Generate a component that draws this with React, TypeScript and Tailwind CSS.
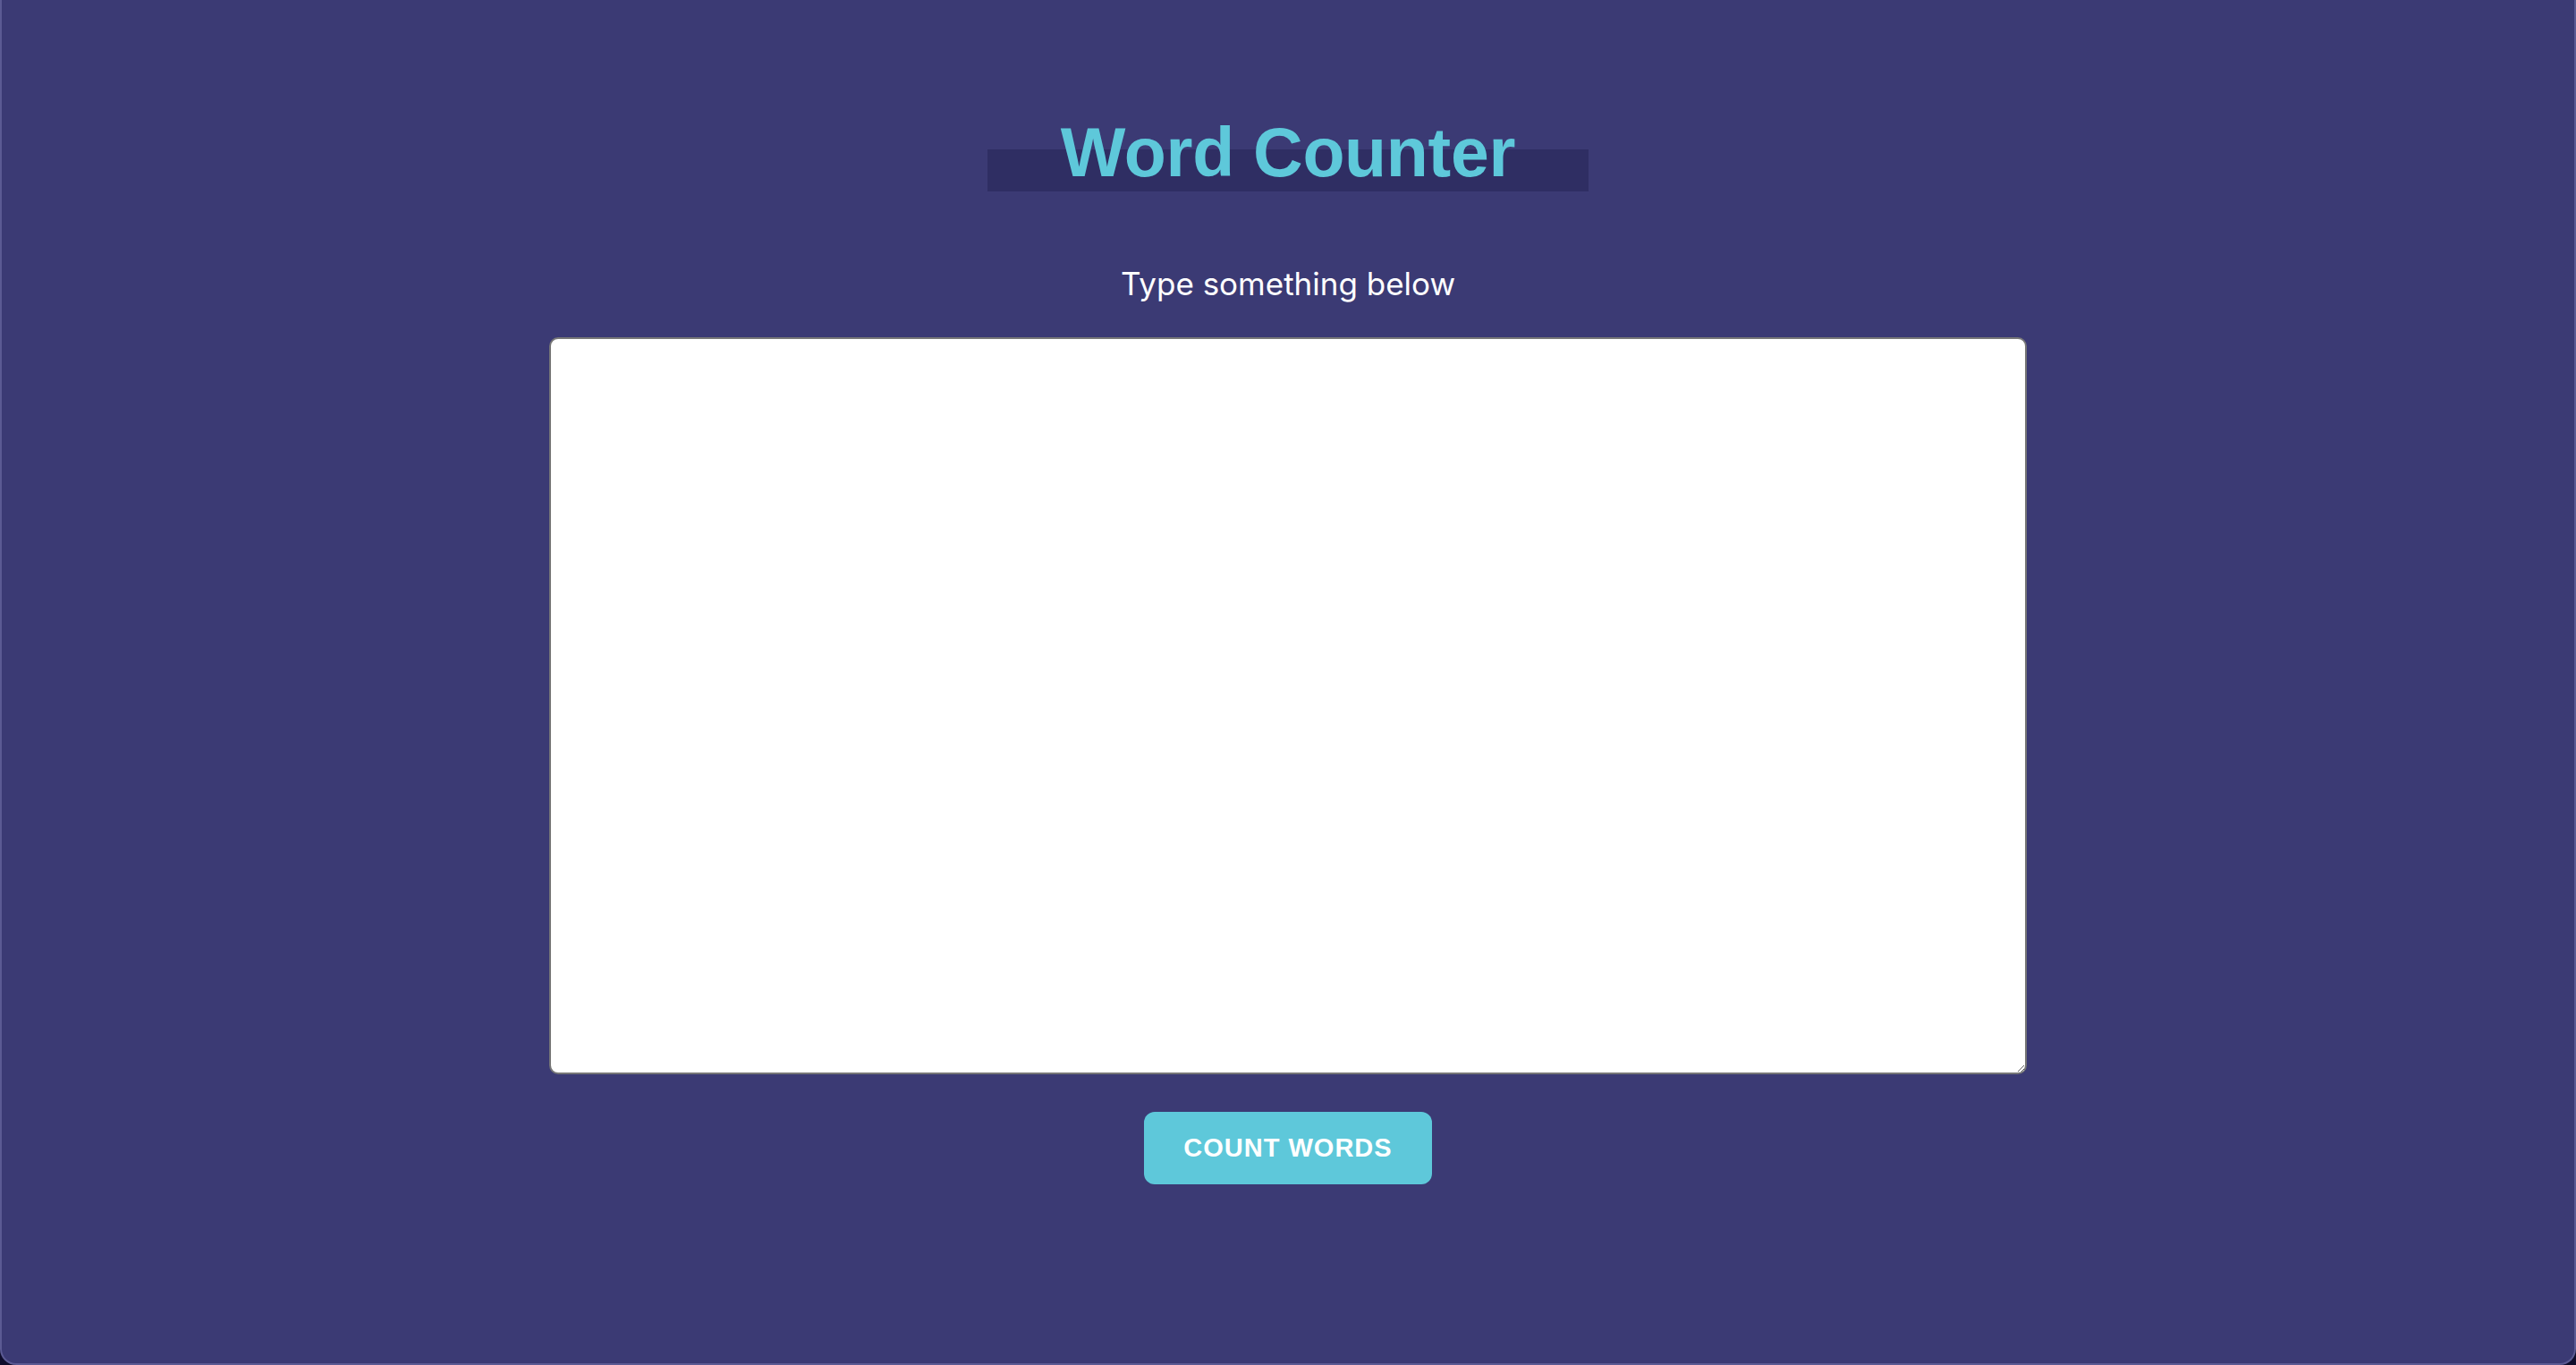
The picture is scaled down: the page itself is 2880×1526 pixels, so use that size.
import React, { useState } from "react";

export default function App() {
  const [text, setText] = useState("");

  return (
    <div className="bg-[#0f0d2c] min-h-[1526px] w-full">
      <div className="flex h-[1526px] flex-col items-center rounded-b-[18px] border-2 border-t-0 border-[#5b5a93] bg-[#3b3a74] pt-[130px]">
        {/* title with highlight bar */}
        <div className="relative">
          <span className="absolute left-[-82px] right-[-82px] top-[37px] h-[47px] bg-[#2f2e63]" />
          <h1 className="relative font-['Liberation_Sans',Arial,sans-serif] text-[77px] font-bold leading-[80px] tracking-[-0.3px] text-[#5ec8da]">
            Word Counter
          </h1>
        </div>

        <p className="mt-[87px] font-['Inter',sans-serif] text-[35px] leading-[40px] text-white">
          Type something below
        </p>

        <textarea
          value={text}
          onChange={(e) => setText(e.target.value)}
          className="mt-[40px] h-[824px] w-[1652px] rounded-[10px] border-2 border-[#777777] bg-white p-3 text-[28px] text-black outline-none"
        />

        <button className="mt-[42px] flex h-[81px] w-[322px] items-center justify-center rounded-[12px] bg-[#5ec8da] font-['Liberation_Sans',Arial,sans-serif] text-[29px] font-bold tracking-[1px] text-white">
          COUNT WORDS
        </button>
      </div>
    </div>
  );
}
